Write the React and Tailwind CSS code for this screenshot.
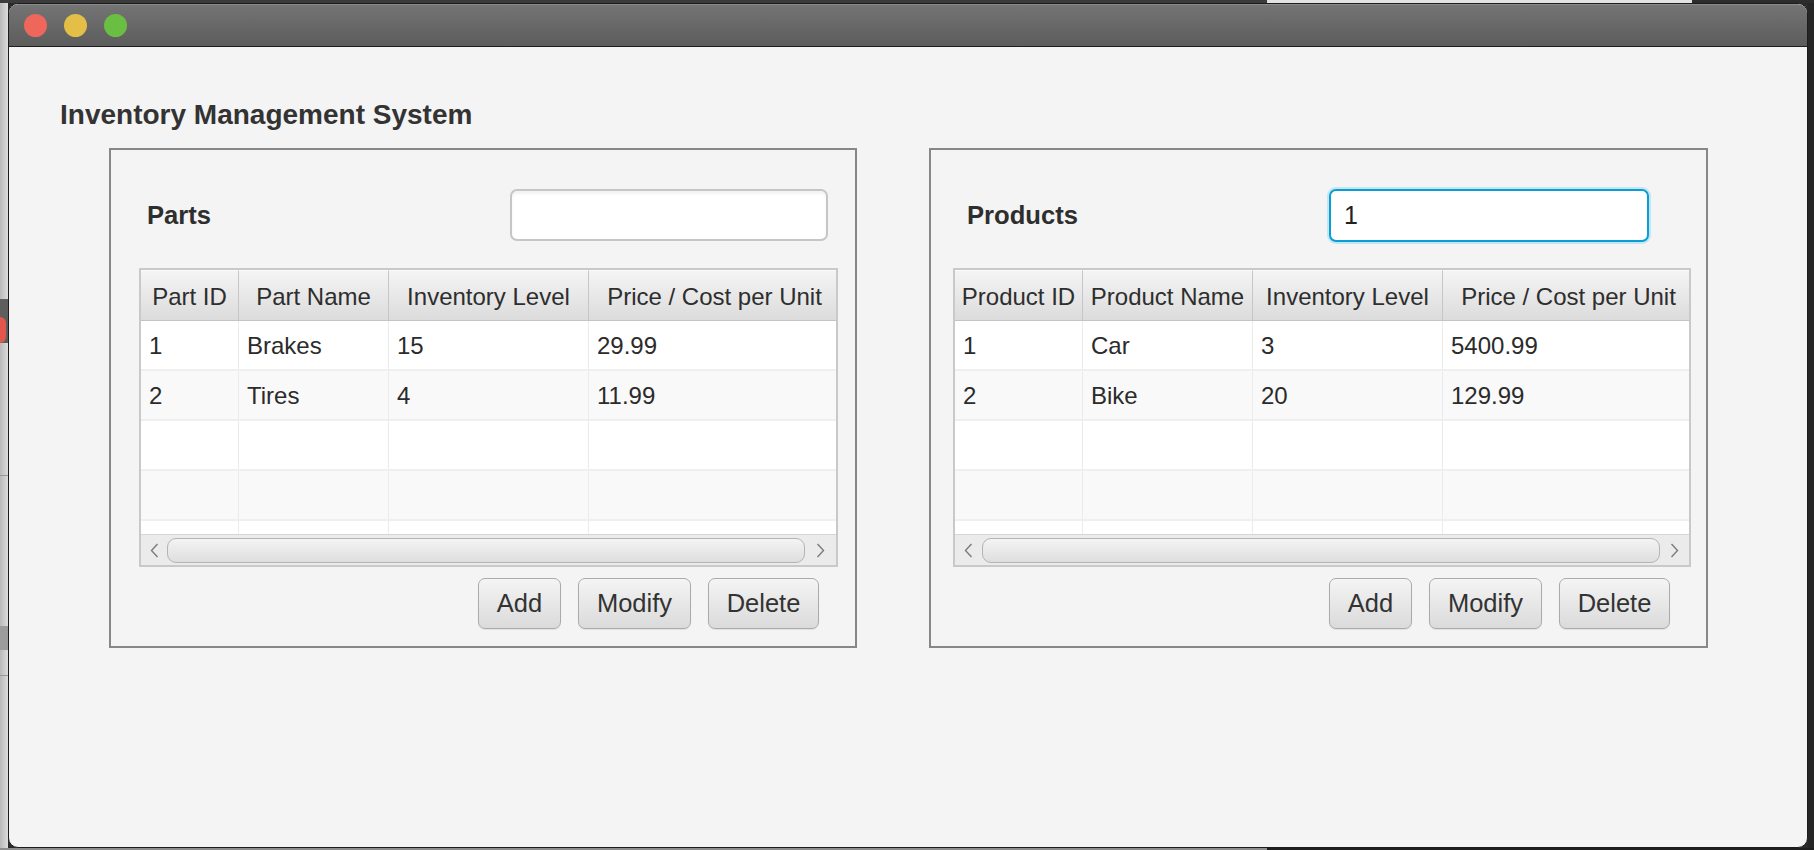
import React from "react";

const parts = [
  { id: "1", name: "Brakes", inv: "15", price: "29.99" },
  { id: "2", name: "Tires", inv: "4", price: "11.99" },
];

const products = [
  { id: "1", name: "Car", inv: "3", price: "5400.99" },
  { id: "2", name: "Bike", inv: "20", price: "129.99" },
];

const partCols = [
  { label: "Part ID", w: "w-[98px]" },
  { label: "Part Name", w: "w-[150px]" },
  { label: "Inventory Level", w: "w-[200px]" },
  { label: "Price / Cost per Unit", w: "w-[252px]" },
];

const productCols = [
  { label: "Product ID", w: "w-[128px]" },
  { label: "Product Name", w: "w-[170px]" },
  { label: "Inventory Level", w: "w-[190px]" },
  { label: "Price / Cost per Unit", w: "w-[252px]" },
];

function Chevron({ dir }) {
  return (
    <svg width="9" height="15" viewBox="0 0 9 15" fill="none">
      <path
        d={dir === "left" ? "M7.5 1 L1.5 7.5 L7.5 14" : "M1.5 1 L7.5 7.5 L1.5 14"}
        stroke="#7b7b7b"
        strokeWidth="1.4"
      />
    </svg>
  );
}

function DataTable({ cols, rows, width, leftW, rightW }) {
  const keys = ["id", "name", "inv", "price"];
  return (
    <div className={`${width} h-[299px] flex flex-col border-2 border-[#c9c9c9] bg-white overflow-hidden`}>
      {/* header */}
      <div className="flex h-[51px] shrink-0 border-b border-[#c4c4c4] bg-linear-to-b from-[#f5f5f5] to-[#dcdcdc]">
        {cols.map((c) => (
          <div
            key={c.label}
            className={`${c.w} shrink-0 flex items-center justify-center pt-[2px] whitespace-nowrap border-r border-[#c6c6c6] border-t border-t-[#fafafa] text-[24px] text-[#2e2e2e]`}
          >
            {c.label}
          </div>
        ))}
      </div>

      {/* body */}
      <div className="flex flex-col h-[213px] shrink-0 overflow-hidden">
        {[0, 1, 2, 3, 4].map((i) => {
          const r = rows[i];
          return (
            <div
              key={i}
              className={`flex h-[50px] shrink-0 border-b-2 border-[#efefef] ${i % 2 ? "bg-[#f9f9f9]" : "bg-white"}`}
            >
              {cols.map((c, j) => (
                <div
                  key={c.label}
                  className={`${c.w} shrink-0 flex items-center pl-[8px] pt-[2px] border-r border-[#ebebeb] text-[24px] text-[#2b2b2b] whitespace-nowrap`}
                >
                  {r ? r[keys[j]] : ""}
                </div>
              ))}
            </div>
          );
        })}
      </div>

      {/* horizontal scroll bar */}
      <div className="flex items-center h-[31px] shrink-0 bg-[#ebebeb] border-t border-[#d6d6d6]">
        <div className={`${leftW} flex justify-center`}>
          <Chevron dir="left" />
        </div>
        <div className="flex-1 h-[25px] rounded-[9px] border-[1.5px] border-[#b4b4b4] bg-linear-to-b from-[#f4f4f4] to-[#dedede]" />
        <div className={`${rightW} flex justify-center`}>
          <Chevron dir="right" />
        </div>
      </div>
    </div>
  );
}

function Btn({ w, children }) {
  return (
    <button
      className={`${w} h-[51px] rounded-[7px] border-[1.5px] border-[#ababab] bg-linear-to-b from-[#f4f4f4] to-[#dbdbdb] text-[25.5px] text-[#333] shadow-[0_1px_1px_rgba(0,0,0,0.08)]`}
    >
      {children}
    </button>
  );
}

function Panel({ title, width, input, inputMr, tableMl, cols, rows, tableW, leftW, rightW }) {
  return (
    <div className={`${width} h-[500px] shrink-0 border-2 border-[#878787] flex flex-col pt-[39px]`}>
      <div className="flex items-center h-[52px]">
        <span className="ml-[36px] mt-[2px] text-[25.6px] font-bold text-[#2e2e2e] leading-none">{title}</span>
        <div className={`ml-auto ${inputMr}`}>{input}</div>
      </div>
      <div className={`mt-[27px] ${tableMl}`}>
        <DataTable cols={cols} rows={rows} width={tableW} leftW={leftW} rightW={rightW} />
      </div>
      <div className="mt-[11px] flex justify-end gap-[17px] pr-[36px]">
        <Btn w="w-[83px]">Add</Btn>
        <Btn w="w-[113px]">Modify</Btn>
        <Btn w="w-[111px]">Delete</Btn>
      </div>
    </div>
  );
}

export default function App() {
  return (
    <div className="w-[1814px] h-[850px] bg-[#2a2a2a] flex flex-col overflow-hidden font-['Liberation_Sans',Arial,sans-serif]">
      {/* strip above the window */}
      <div className="h-[3px] flex shrink-0">
        <div className="w-[1267px] bg-[#3b3b3b]" />
        <div className="w-[425px] bg-[#e2e2e2]" />
        <div className="flex-1 bg-[#2c2c2c]" />
      </div>

      <div className="flex h-[845px] shrink-0">
        {/* desktop behind, left edge */}
        <div className="w-[8px] shrink-0 flex flex-col bg-linear-to-r from-[#b9b9b9] to-[#dcdcdc]">
          <div className="h-[296px]" />
          <div className="h-[44px] bg-[#5e5e5e] flex flex-col justify-end">
            <div className="h-[26px] w-[6px] rounded-r-full bg-[#e2574c]" />
          </div>
          <div className="h-[132px]" />
          <div className="h-px bg-[#9a9a9a]" />
          <div className="h-[150px]" />
          <div className="h-[24px] bg-[#9c9c9c]" />
          <div className="h-[25px]" />
          <div className="h-px bg-[#9a9a9a]" />
        </div>

        {/* window */}
        <div className="w-[1800px] shrink-0 flex flex-col rounded-[10px] overflow-hidden border border-[#1c1c1c] bg-[#f4f4f4]">
          <div className="h-[43px] shrink-0 flex items-center gap-[17px] pl-[15px] border-b border-[#1e1e1e] border-t border-t-[#8a8a8a] bg-linear-to-b from-[#747474] to-[#5c5c5c]">
            <div className="w-[23px] h-[23px] rounded-full bg-[#ef675b]" />
            <div className="w-[23px] h-[23px] rounded-full bg-[#e3bf47]" />
            <div className="w-[23px] h-[23px] rounded-full bg-[#6abf43]" />
          </div>

          <h1 className="mt-[52px] ml-[51px] text-[28px] leading-[32px] font-bold text-[#333]">
            Inventory Management System
          </h1>

          <div className="mt-[17px] ml-[100px] flex gap-[72px]">
            <Panel
              title="Parts"
              width="w-[748px]"
              inputMr="mr-[27px]"
              tableMl="ml-[28px]"
              tableW="w-[699px]"
              leftW="w-[26px]"
              rightW="w-[31px]"
              cols={partCols}
              rows={parts}
              input={
                <div className="w-[318px] h-[52px] rounded-[7px] border-2 border-[#c6c6c6] bg-white shadow-[inset_0_3px_3px_rgba(0,0,0,0.05)]" />
              }
            />
            <Panel
              title="Products"
              width="w-[779px]"
              inputMr="mr-[57px]"
              tableMl="ml-[22px]"
              tableW="w-[738px]"
              leftW="w-[27px]"
              rightW="w-[29px]"
              cols={productCols}
              rows={products}
              input={
                <div className="w-[320px] h-[53px] rounded-[7px] border-2 border-[#0a9fd4] bg-white shadow-[0_0_0_2px_#c3e6f5] flex items-center pl-[13px] pt-[2px] text-[25px] text-[#222]">
                  1
                </div>
              }
            />
          </div>
        </div>

        <div className="flex-1 bg-[#262626]" />
      </div>

      {/* strip below the window */}
      <div className="flex-1 flex">
        <div className="w-[1267px] bg-[#8d8d8d]" />
        <div className="flex-1 bg-[#1f1f1f]" />
      </div>
    </div>
  );
}
